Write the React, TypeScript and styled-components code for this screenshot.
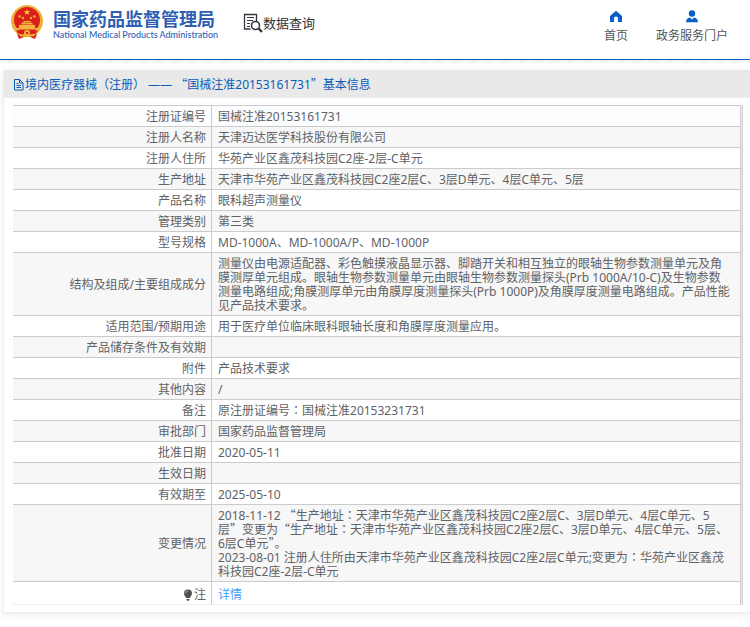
import React from "react";
import styled, { createGlobalStyle } from "styled-components";

const GlobalStyle = createGlobalStyle`
  * { box-sizing: border-box; }
  body {
    margin: 0;
    background: #fff;
    color: #606266;
    font: 12px/14px "Noto Sans", "Noto Sans CJK SC", sans-serif;
    overflow-x: hidden;
  }
`;

const Header = styled.header`
  display: flex;
  align-items: flex-start;
  height: 60px;
  padding: 0 22px 0 10px;
  border-bottom: 1px solid #0a5cb8;
  background: #fff;
`;

const HatchStrip = styled.div`
  height: 3px;
  background: repeating-linear-gradient(135deg, #fff 0 1px, #ebebeb 1px 2px);
`;

const Brand = styled.a`
  display: flex;
  gap: 9px;
  padding-top: 4px;
  color: #2f5fb3;
  text-decoration: none;
`;

const BrandText = styled.span`
  display: flex;
  flex-direction: column;
  padding-top: 4px;
`;

const BrandName = styled.span`
  font: 700 18px/20px "Noto Sans CJK SC", sans-serif;
`;

const BrandSub = styled.span`
  font: 500 9px/14px Lato, sans-serif;
  white-space: nowrap;
`;

const QueryLink = styled.a`
  display: flex;
  align-items: center;
  margin-left: 24px;
  padding-top: 13px;
  color: #333;
  font: 13px/20px "Noto Sans CJK SC", sans-serif;
  text-decoration: none;
`;

const Nav = styled.nav`
  display: flex;
  gap: 28px;
  margin-left: auto;
  padding-top: 10px;
`;

const NavLink = styled.a`
  display: flex;
  flex-direction: column;
  align-items: center;
  gap: 6px;
  color: #555;
  line-height: 14px;
  text-decoration: none;

  svg { color: #0a5fc4; }
`;

const Panel = styled.main`
  margin: 7px 0 14px 3px;
  border: 1px solid #ebeef5;
  border-width: 0 0 1px 1px;
  box-shadow: 0 2px 8px rgba(0, 0, 0, 0.08);
  background: #fff;
`;

const PanelTitle = styled.h1`
  display: flex;
  align-items: center;
  height: 28px;
  margin: 0;
  padding: 2px 9px 0;
  border-bottom: 1px solid #ebeef5;
  background: #e9e9e9;
  color: #0a5cb8;
  font-size: 12px;
  font-weight: 400;
  white-space: pre;
`;

const PanelBody = styled.div`
  padding: 7px 7px 7px 9px;
`;

const TableFrame = styled.div`
  padding-right: 1px;
  border-right: 1px solid #cacbcd;
  background: #ebeef5;
`;

const DetailTable = styled.table`
  width: 100%;
  border-collapse: separate;
  border-spacing: 0;
  border-top: 1px solid #cacbcd;
  border-right: 1px solid #cacbcd;
  table-layout: fixed;
`;

const LabelCol = styled.col`
  width: 199px;
`;

const Row = styled.tr`
  background: #fff;

  &:nth-child(even) { background: #f7f7f7; }
  &:first-child { background: #fbfdff; }
  > * { border-bottom: 1px solid #cacbcd; }
  &:last-child > * {
    padding-top: 6px;
    border-bottom-color: #ebeef5;
  }
`;

const LabelCell = styled.th`
  padding: 4px 5px 2px;
  border-right: 1px solid #cacbcd;
  font-weight: 400;
  text-align: right;
`;

const ValueCell = styled.td`
  padding: 4px 9px 2px 6px;
`;

const NoteLabel = styled.span`
  display: inline-flex;
  align-items: center;
  vertical-align: top;
`;

const DetailLink = styled.a`
  color: #409eff;
  text-decoration: none;
`;

const WideMark = styled.span<{ $centered?: boolean }>`
  font-family: ${(p) => (p.$centered ? '"Noto Sans CJK TC"' : '"Noto Sans CJK SC"')}, sans-serif;
  line-height: 0;
`;

function Mixed({ text }: { text: string }) {
  return (
    <>
      {text.split(/([“”：])/).map((part, i) => {
        if (/^[“”]$/.test(part)) return <WideMark key={i}>{part}</WideMark>;
        if (part === "：") return <WideMark key={i} $centered>{part}</WideMark>;
        return part;
      })}
    </>
  );
}

function Emblem() {
  return (
    <svg width="34" height="36" viewBox="0 0 34 36" aria-hidden="true">
      <path d="M6 27 L9 35 L14 33 H20 L25 35 L28 27 Z" fill="#df2018" />
      <circle cx="17" cy="17" r="16" fill="#efb63c" />
      <circle cx="17" cy="17" r="14.4" fill="none" stroke="#d9902a" strokeWidth="0.8" strokeDasharray="1.5 1.5" />
      <circle cx="17" cy="16" r="13" fill="#dc1f18" />
      <path d="M17 5l.9 2.200h2.400l-1.900 1.500.7 2.300-2.100-1.400-2.100 1.400.7-2.300-1.900-1.500h2.400z" fill="#f8c944" />
      <g fill="#f3b53d">
        <circle cx="9.600" cy="12.500" r="1.200" />
        <circle cx="13" cy="14" r="1.200" />
        <circle cx="21" cy="14" r="1.200" />
        <circle cx="24.400" cy="12.500" r="1.200" />
        <path d="M12 18.500l2-1.500h6l2 1.500zM10.500 20.500l1.500-1.500h10l1.500 1.500zM9 24v-3h16v3h3.500v1.500h-23V24z" />
      </g>
      <path d="M6 26.500h22l-3 4H9z" fill="#dc1f18" />
      <path d="M8 29.500l6 1.500h6l6-1.500-2.500 3-4-1-2.500 2-2.500-2-4 1z" fill="#f0b93d" />
      <circle cx="17" cy="29" r="3" fill="#f0b93d" />
      <circle cx="17" cy="29" r="1.200" fill="#dc1f18" />
    </svg>
  );
}

function QueryIcon() {
  return (
    <svg width="21" height="20" viewBox="0 0 21 20" fill="none" stroke="#39343f" aria-hidden="true">
      <path d="M14.500 8V1.500h-12v14.500h6" strokeWidth="1.300" />
      <path d="M5 4.500h7M5 7.500h6M5 10.500h3M5 13.500h3" />
      <circle cx="13.500" cy="12.500" r="4" strokeWidth="1.600" />
      <path d="M16.500 15.500l3.500 3.500" strokeWidth="2.400" />
    </svg>
  );
}

function HomeIcon() {
  return (
    <svg width="14" height="13" viewBox="0 0 14 13" fill="currentColor" aria-hidden="true">
      <path d="M7 .8L1 5.900V12h4V8.500a2 2 0 0 1 4 0V12h4V5.900z" />
    </svg>
  );
}

function UserIcon() {
  return (
    <svg width="14" height="13" viewBox="0 0 14 13" fill="currentColor" aria-hidden="true">
      <circle cx="7" cy="3.500" r="3.200" />
      <path d="M1 12.300c0-3 1.500-4.600 4-4.900l2 2 2-2c2.500.3 4 1.900 4 4.900z" />
    </svg>
  );
}

function DocumentIcon() {
  return (
    <svg width="12" height="12" viewBox="0 0 12 12" fill="none" stroke="currentColor" aria-hidden="true">
      <path d="M1.500.5h5l3.500 3.500v7h-8.500zM6.500.5v3.500h3.500M3.500 4.500h2M3.500 6.500h4.500M3.500 8.500h4.500" />
    </svg>
  );
}

function BulbIcon() {
  return (
    <svg width="12" height="12" viewBox="0 0 12 12" aria-hidden="true">
      <path d="M6 .5a4 4 0 0 1 4 4c0 2-1.500 2.800-2 4.500H4C3.500 7.300 2 6.500 2 4.500a4 4 0 0 1 4-4zM4.500 10h3v1l-.7.700H5.200L4.500 11z" fill="#4d5055" />
      <path d="M3.500 4.500A2.500 2.500 0 0 1 6 2" fill="none" stroke="#bbb" strokeWidth="0.800" />
    </svg>
  );
}

const records: { label: string; lines: string[] }[] = [
  { label: "注册证编号", lines: ["国械注准20153161731"] },
  { label: "注册人名称", lines: ["天津迈达医学科技股份有限公司"] },
  { label: "注册人住所", lines: ["华苑产业区鑫茂科技园C2座-2层-C单元"] },
  { label: "生产地址", lines: ["天津市华苑产业区鑫茂科技园C2座2层C、3层D单元、4层C单元、5层"] },
  { label: "产品名称", lines: ["眼科超声测量仪"] },
  { label: "管理类别", lines: ["第三类"] },
  { label: "型号规格", lines: ["MD-1000A、MD-1000A/P、MD-1000P"] },
  {
    label: "结构及组成/主要组成成分",
    lines: [
      "测量仪由电源适配器、彩色触摸液晶显示器、脚踏开关和相互独立的眼轴生物参数测量单元及角膜测厚单元组成。眼轴生物参数测量单元由眼轴生物参数测量探头(Prb 1000A/10-C)及生物参数测量电路组成;角膜测厚单元由角膜厚度测量探头(Prb 1000P)及角膜厚度测量电路组成。产品性能见产品技术要求。",
    ],
  },
  { label: "适用范围/预期用途", lines: ["用于医疗单位临床眼科眼轴长度和角膜厚度测量应用。"] },
  { label: "产品储存条件及有效期", lines: ["\u00a0"] },
  { label: "附件", lines: ["产品技术要求"] },
  { label: "其他内容", lines: ["/"] },
  { label: "备注", lines: ["原注册证编号：国械注准20153231731"] },
  { label: "审批部门", lines: ["国家药品监督管理局"] },
  { label: "批准日期", lines: ["2020-05-11"] },
  { label: "生效日期", lines: ["\u00a0"] },
  { label: "有效期至", lines: ["2025-05-10"] },
  {
    label: "变更情况",
    lines: [
      "2018-11-12 “生产地址：天津市华苑产业区鑫茂科技园C2座2层C、3层D单元、4层C单元、5层”变更为“生产地址：天津市华苑产业区鑫茂科技园C2座2层C、3层D单元、4层C单元、5层、6层C单元”。",
      "2023-08-01 注册人住所由天津市华苑产业区鑫茂科技园C2座2层C单元;变更为：华苑产业区鑫茂科技园C2座-2层-C单元",
    ],
  },
];

export default function App() {
  return (
    <>
      <GlobalStyle />
      <Header>
        <Brand href="#">
          <Emblem />
          <BrandText>
            <BrandName>国家药品监督管理局</BrandName>
            <BrandSub>National Medical Products Administration</BrandSub>
          </BrandText>
        </Brand>
        <QueryLink href="#query">
          <QueryIcon />
          数据查询
        </QueryLink>
        <Nav>
          <NavLink href="#home">
            <HomeIcon />
            首页
          </NavLink>
          <NavLink href="#portal">
            <UserIcon />
            政务服务门户
          </NavLink>
        </Nav>
      </Header>
      <HatchStrip />
      <Panel>
        <PanelTitle>
          <DocumentIcon />
          <span>
            <Mixed text="境内医疗器械（注册） —— “国械注准20153161731”基本信息" />
          </span>
        </PanelTitle>
        <PanelBody>
          <TableFrame>
            <DetailTable>
              <colgroup>
                <LabelCol />
                <col />
              </colgroup>
              <tbody>
                {records.map(({ label, lines }) => (
                  <Row key={label}>
                    <LabelCell scope="row">{label}</LabelCell>
                    <ValueCell>
                      {lines.map((line, i) => (
                        <React.Fragment key={i}>
                          {i > 0 && <br />}
                          <Mixed text={line} />
                        </React.Fragment>
                      ))}
                    </ValueCell>
                  </Row>
                ))}
                <Row>
                  <LabelCell scope="row">
                    <NoteLabel>
                      <BulbIcon />注
                    </NoteLabel>
                  </LabelCell>
                  <ValueCell>
                    <DetailLink href="#detail">详情</DetailLink>
                  </ValueCell>
                </Row>
              </tbody>
            </DetailTable>
          </TableFrame>
        </PanelBody>
      </Panel>
    </>
  );
}
